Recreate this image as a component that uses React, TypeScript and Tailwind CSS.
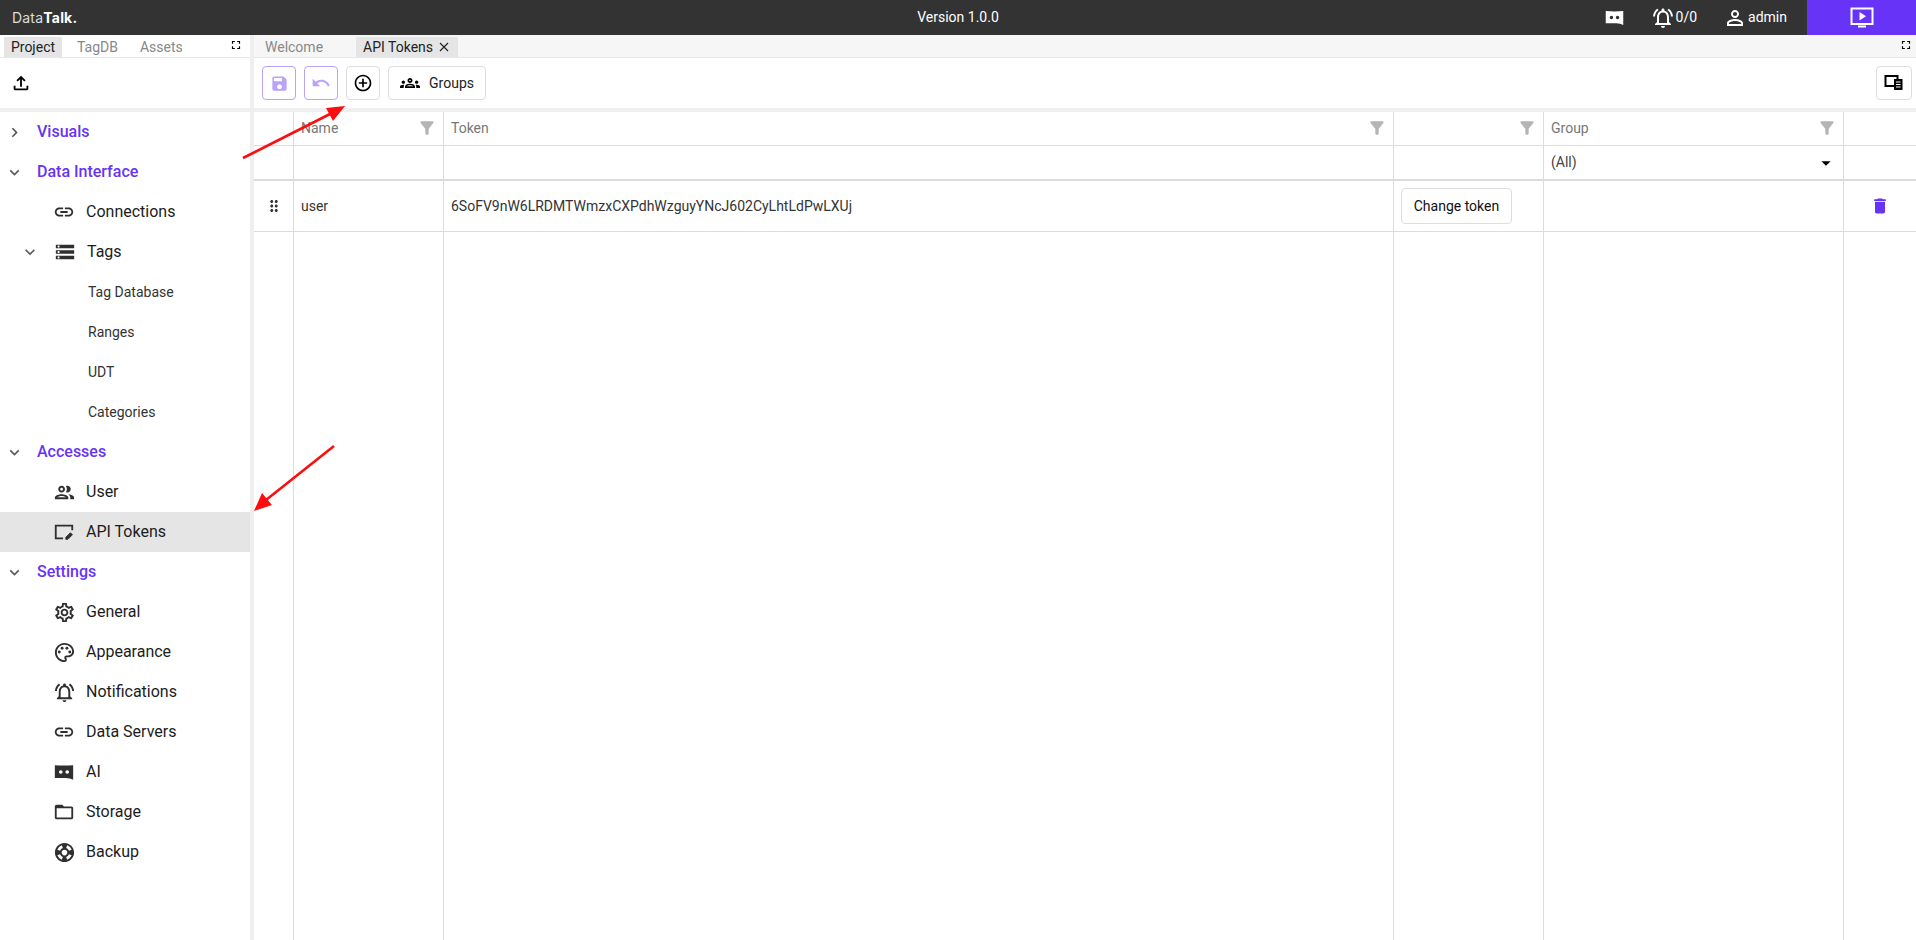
import React from 'react'
import {
  MdAddCircleOutline,
  MdArrowDropDown,
  MdChevronRight,
  MdDelete,
  MdDragIndicator,
  MdExpandMore,
  MdFilterAlt,
  MdFullscreen,
  MdLink,
  MdOutlineFileUpload,
  MdOutlineFolderOpen,
  MdOutlineGroups,
  MdOutlineNotificationsActive,
  MdOutlinePalette,
  MdOutlinePeople,
  MdOutlinePersonOutline,
  MdOutlineSettings,
  MdOutlineSupport,
  MdSave,
  MdStorage,
  MdUndo,
} from 'react-icons/md'

const BotIcon = ({ size = 22, className = '' }: { size?: number; className?: string }) => (
  <svg width={size} height={size} viewBox="0 0 24 24" className={className} fill="currentColor">
    <path fillRule="evenodd" d="M2 4.5 Q12 5.5 22 4.5 V20.5 Q19 18.5 14 18.5 H2 Z M8.5 10 a2 2 0 1 0 0 4 a2 2 0 1 0 0-4 Z M15.5 10 a2 2 0 1 0 0 4 a2 2 0 1 0 0-4 Z" />
  </svg>
)

const TokenIcon = () => (
  <svg width="22" height="22" viewBox="0 0 24 24" fill="none" stroke="currentColor" strokeWidth="2">
    <path d="M11 19 H3 V5 H21 V10" />
    <path d="M14 20 v-2.2 l5-5 2.2 2.2-5 5 Z" fill="currentColor" strokeWidth="1" />
  </svg>
)

const PanelIcon = () => (
  <svg width="20" height="20" viewBox="0 0 20 20" fill="none">
    <rect x="1.5" y="3" width="12" height="10" stroke="black" strokeWidth="2" />
    <rect x="10" y="6" width="8.5" height="11" fill="black" />
    <path d="M12 9h4.5M12 11.5h4.5M12 14h4.5" stroke="white" strokeWidth="1" />
  </svg>
)

const NavSection = ({ label, open }: { label: string; open: boolean }) => (
  <div className="h-10 flex items-center">
    <span className="w-[30px] pl-[5px] text-[#555] shrink-0">
      {open ? <MdExpandMore size={19} /> : <MdChevronRight size={19} />}
    </span>
    <span className="ml-[7px] text-[16px] font-medium text-[#6733f6]">{label}</span>
  </div>
)

const NavItem = ({ icon, label, active }: { icon: React.ReactNode; label: string; active?: boolean }) => (
  <div className={`h-10 flex items-center pl-[53px] ${active ? 'bg-[#e5e5e5]' : ''}`}>
    <span className="w-[33px] text-[#2f2f2f] shrink-0 flex items-center">{icon}</span>
    <span className="text-[16px] text-[#1c1c1c]">{label}</span>
  </div>
)

const SubItem = ({ label }: { label: string }) => (
  <div className="h-10 flex items-center pl-[88px] text-[14px] text-[#333]">{label}</div>
)

const ToolButton = ({ children, disabled, className = 'w-[34px]' }: { children: React.ReactNode; disabled?: boolean; className?: string }) => (
  <button className={`h-[34px] ${className} flex items-center justify-center rounded border ${disabled ? 'border-[#b9a3fa] text-[#b9a3fa]' : 'border-[#ddd] text-black'}`}>
    {children}
  </button>
)

// name / token / action / group / delete columns, after the drag handle
const columns = 'grid grid-cols-[40px_150px_950px_150px_300px_1fr]'
const cell = 'border-r border-[#dcdcdc] flex items-center min-w-0 px-[7px]'

const HeaderCell = ({ label, filter = true }: { label?: string; filter?: boolean }) => (
  <div className={`${cell} justify-between text-[14px] text-[#777]`}>
    <span>{label}</span>
    {filter && <MdFilterAlt size={20} className="text-[#b4b4b4] -mr-[1px] -mt-[2px]" />}
  </div>
)

const Arrow = ({ className, points, head }: { className: string; points: string; head: string }) => (
  <svg className={`absolute pointer-events-none ${className}`} viewBox="0 0 120 80" fill="#fd0d0d">
    <polyline points={points} stroke="#fd0d0d" strokeWidth="2.6" fill="none" />
    <polygon points={head} />
  </svg>
)

export default function App() {
  return (
    <div className="relative h-[940px] w-[1916px] overflow-hidden bg-white font-['Roboto',sans-serif]">
      <header className="h-[35px] bg-[#333] text-white flex items-center relative">
        <div className="pl-[12px] text-[14px] tracking-[0.2px] text-[#ddd] font-['Inter',sans-serif]">
          Data<span className="font-bold text-white">Talk.</span>
        </div>
        <div className="absolute left-0 right-0 text-center text-[14px]">Version 1.0.0</div>
        <div className="ml-auto flex items-center h-full">
          <BotIcon size={21} className="mr-[26px]" />
          <MdOutlineNotificationsActive size={24} />
          <span className="text-[14px] ml-[1px] mr-[26px]">0/0</span>
          <MdOutlinePersonOutline size={24} />
          <span className="text-[14px] ml-[1px] mr-[20px]">admin</span>
          <div className="w-[109px] h-full bg-[#6733f6] flex items-center justify-center">
            <svg width="24" height="24" viewBox="0 0 24 24" fill="none">
              <rect x="1.5" y="2.5" width="21" height="15.5" stroke="white" strokeWidth="2" />
              <path d="M9.5 6 L16 10.2 L9.5 14.5 Z" fill="white" />
              <path d="M8 20.5h8" stroke="white" strokeWidth="2" />
            </svg>
          </div>
        </div>
      </header>

      <div className="flex h-[905px]">
        <aside className="w-[250px] shrink-0 flex flex-col">
          <div className="h-[23px] border-b border-[#e8e8e8] flex items-end pl-[4px] text-[14px] text-[#888] relative">
            <span className="h-[20px] w-[58px] bg-[#e5e5e5] text-[#222] flex items-center justify-center">Project</span>
            <span className="ml-[15px] h-[20px] flex items-center">TagDB</span>
            <span className="ml-[22px] h-[20px] flex items-center">Assets</span>
            <MdFullscreen size={14} className="absolute right-[7px] top-[3px] text-black" />
          </div>
          <div className="h-[50px] flex items-center pl-[10px] text-black">
            <MdOutlineFileUpload size={22} />
          </div>
          <div className="h-[4px] bg-[#efefef]" />
          <nav className="flex-1">
            <NavSection label="Visuals" open={false} />
            <NavSection label="Data Interface" open />
            <NavItem icon={<MdLink size={22} />} label="Connections" />
            <div className="h-10 flex items-center pl-[20px]">
              <MdExpandMore size={20} className="text-[#555]" />
              <span className="ml-[14px] w-[33px] text-[#2f2f2f]"><MdStorage size={22} /></span>
              <span className="text-[16px] text-[#1c1c1c]">Tags</span>
            </div>
            <SubItem label="Tag Database" />
            <SubItem label="Ranges" />
            <SubItem label="UDT" />
            <SubItem label="Categories" />
            <NavSection label="Accesses" open />
            <NavItem icon={<MdOutlinePeople size={23} />} label="User" />
            <NavItem icon={<TokenIcon />} label="API Tokens" active />
            <NavSection label="Settings" open />
            <NavItem icon={<MdOutlineSettings size={23} />} label="General" />
            <NavItem icon={<MdOutlinePalette size={23} />} label="Appearance" />
            <NavItem icon={<MdOutlineNotificationsActive size={23} />} label="Notifications" />
            <NavItem icon={<MdLink size={22} />} label="Data Servers" />
            <NavItem icon={<BotIcon size={22} />} label="AI" />
            <NavItem icon={<MdOutlineFolderOpen size={22} />} label="Storage" />
            <NavItem icon={<MdOutlineSupport size={23} />} label="Backup" />
          </nav>
        </aside>

        <div className="w-[4px] shrink-0 bg-[#efefef]" />

        <main className="flex-1 min-w-0 flex flex-col">
          <div className="h-[23px] bg-[#f6f6f6] border-b border-[#e8e8e8] flex items-end text-[14px] text-[#888] relative">
            <span className="ml-[11px] h-[20px] flex items-center">Welcome</span>
            <span className="ml-[33px] h-[20px] w-[102px] pl-[7px] bg-[#e5e5e5] text-[#222] flex items-center">
              API Tokens
              <svg width="10" height="10" viewBox="0 0 10 10" className="ml-[6px]" stroke="#222" strokeWidth="1.2">
                <path d="M1 1l8 8M9 1l-8 8" />
              </svg>
            </span>
            <MdFullscreen size={14} className="absolute right-[3px] top-[3px] text-black" />
          </div>
          <div className="h-[50px] flex items-center pl-[8px] pr-[4px] gap-[8px]">
            <ToolButton disabled><MdSave size={19} /></ToolButton>
            <ToolButton disabled><MdUndo size={20} /></ToolButton>
            <ToolButton><MdAddCircleOutline size={20} /></ToolButton>
            <ToolButton className="w-[98px] gap-[9px]">
              <MdOutlineGroups size={20} />
              <span className="text-[14px] text-[#222]">Groups</span>
            </ToolButton>
            <ToolButton className="w-[36px] ml-auto"><PanelIcon /></ToolButton>
          </div>
          <div className="h-[4px] bg-[#efefef]" />

          <div className="flex-1 relative">
            <div className={`${columns} h-[34px] border-b border-[#dcdcdc]`}>
              <div className={cell} />
              <HeaderCell label="Name" />
              <HeaderCell label="Token" />
              <HeaderCell />
              <HeaderCell label="Group" />
              <div />
            </div>
            <div className={`${columns} h-[35px] border-b-2 border-[#dcdcdc]`}>
              <div className={cell} />
              <div className={cell} />
              <div className={cell} />
              <div className={cell} />
              <div className={`${cell} justify-between text-[14px] text-[#444]`}>
                <span>(All)</span>
                <MdArrowDropDown size={22} className="text-black -mr-[1px]" />
              </div>
              <div />
            </div>
            <div className={`${columns} h-[51px] border-b border-[#dcdcdc] text-[14px] text-[#333]`}>
              <div className={`${cell} justify-center text-[#333]`}><MdDragIndicator size={18} /></div>
              <div className={cell}>user</div>
              <div className={cell}>6SoFV9nW6LRDMTWmzxCXPdhWzguyYNcJ602CyLhtLdPwLXUj</div>
              <div className={cell}>
                <button className="h-[36px] w-[111px] rounded border border-[#ddd] text-[14px] text-[#111]">Change token</button>
              </div>
              <div className={cell} />
              <div className="flex items-center justify-center text-[#6733f6]"><MdDelete size={20} /></div>
            </div>
            <div className={`${columns} absolute left-0 right-0 top-[120px] bottom-0`}>
              <div className={cell} />
              <div className={cell} />
              <div className={cell} />
              <div className={cell} />
              <div className={cell} />
              <div />
            </div>
          </div>
        </main>
      </div>

      <Arrow className="left-[240px] top-[100px] w-[120px] h-[80px]" points="3,58 92,13" head="105,6 86,8 93,21" />
      <Arrow className="left-[250px] top-[440px] w-[120px] h-[80px]" points="84,6 16,60" head="4,71 12,53 22,65" />
    </div>
  )
}
